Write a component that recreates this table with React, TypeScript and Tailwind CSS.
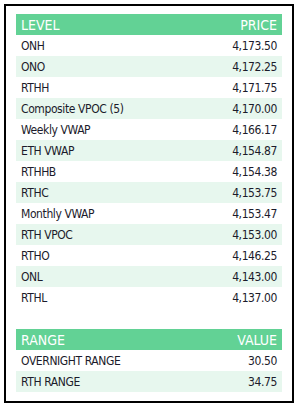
const levels: [string, string][] = [
  ["ONH", "4,173.50"],
  ["ONO", "4,172.25"],
  ["RTHH", "4,171.75"],
  ["Composite VPOC (5)", "4,170.00"],
  ["Weekly VWAP", "4,166.17"],
  ["ETH VWAP", "4,154.87"],
  ["RTHHB", "4,154.38"],
  ["RTHC", "4,153.75"],
  ["Monthly VWAP", "4,153.47"],
  ["RTH VPOC", "4,153.00"],
  ["RTHO", "4,146.25"],
  ["ONL", "4,143.00"],
  ["RTHL", "4,137.00"],
];

const ranges: [string, string][] = [
  ["OVERNIGHT RANGE", "30.50"],
  ["RTH RANGE", "34.75"],
];

function Table({ head, rows }: { head: [string, string]; rows: [string, string][] }) {
  return (
    <table className="w-full border-collapse">
      <thead>
        <tr className="bg-[#62d295] text-white text-[14px]">
          <th className="h-[21px] px-[5px] text-left font-normal">{head[0]}</th>
          <th className="h-[21px] px-[5px] text-right font-normal">{head[1]}</th>
        </tr>
      </thead>
      <tbody className="tracking-[-0.4px]">
        {rows.map(([name, val], i) => (
          <tr key={name} className={i % 2 === 1 ? "bg-[#e7f7ee]" : "bg-white"}>
            <td className="h-[21px] px-[5px] text-left">{name}</td>
            <td className="h-[21px] px-[5px] text-right">{val}</td>
          </tr>
        ))}
      </tbody>
    </table>
  );
}

export default function App() {
  return (
    <div className="w-[298px] h-[407px] bg-white p-1">
      <div
        className="h-full border-2 border-black px-[10px] pt-[8px] text-[12px] leading-none text-[#1b1b2b]"
        style={{ fontFamily: '"DejaVu Sans Condensed", "Liberation Sans", sans-serif' }}
      >
        <Table head={["LEVEL", "PRICE"]} rows={levels} />
        <div className="h-[21px]" />
        <Table head={["RANGE", "VALUE"]} rows={ranges} />
      </div>
    </div>
  );
}
